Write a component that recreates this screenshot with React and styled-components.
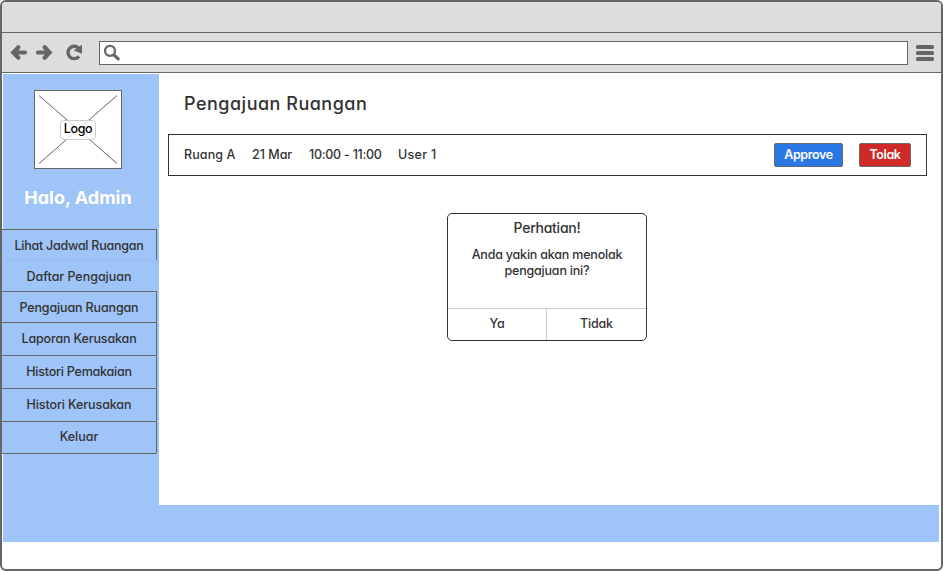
import React from "react";
import styled, { createGlobalStyle } from "styled-components";

const line = "#666666";
const ink = "#333333";
const blue = "#9fc4f7";

const GlobalStyle = createGlobalStyle`
  *, *::before, *::after { box-sizing: border-box; }
  body {
    margin: 0;
    background: #fff;
    color: ${ink};
    font: 500 12.5px/16px Inter, "Open Sans", sans-serif;
    font-feature-settings: "cv11" 1;
  }
  button { font: inherit; font-feature-settings: inherit; color: inherit; padding: 0; margin: 0; }
  h1, h2, p { margin: 0; }
`;

const Window = styled.div`
  display: flex;
  flex-direction: column;
  width: 943px;
  height: 571px;
  border: 2px solid ${line};
  border-radius: 6px;
  overflow: hidden;
`;

const TitleBar = styled.div`
  flex: none;
  height: 31px;
  background: #ddd;
  border-bottom: 1px solid ${line};
`;

const Toolbar = styled.div`
  flex: none;
  display: flex;
  align-items: flex-start;
  height: 40px;
  padding: 8px 7px 0 8px;
  background: #ddd;
  border-bottom: 1px solid ${line};
`;

const NavIcons = styled.svg`
  width: 89px;
  height: 24px;
`;

const AddressBar = styled.div`
  width: 809px;
  height: 24px;
  padding: 2px 3px;
  background: #fff;
  border: 1px solid ${line};
`;

const SearchIcon = styled.svg`
  display: block;
  width: 18px;
  height: 18px;
`;

const MenuIcon = styled.svg`
  width: 18px;
  height: 24px;
  margin-left: 8px;
`;

const Page = styled.div`
  flex: none;
  width: 938px;
  margin-top: 1px;
`;

const Body = styled.div`
  display: flex;
  height: 431px;
`;

const Sidebar = styled.aside`
  width: 157px;
  background: linear-gradient(${blue}, ${blue}) 1px 0 no-repeat;
`;

const LogoBox = styled.div`
  display: grid;
  place-items: center;
  width: 88px;
  height: 79px;
  margin: 16px 0 0 32px;
  border: 1px solid ${line};
  background: #fff;
  > * { grid-area: 1 / 1; }
`;

const Cross = styled.svg`
  width: 86px;
  height: 77px;
`;

const LogoLabel = styled.span`
  width: 36px;
  height: 20px;
  border: 1px solid #ccc;
  border-radius: 4px;
  background: rgba(255, 255, 255, 0.8);
  color: #000;
  line-height: 16px;
  text-align: center;
  letter-spacing: -0.3px;
`;

const Greeting = styled.h2`
  margin: 16px 0 18px;
  padding-right: 5px;
  color: #fff;
  font-size: 18px;
  font-weight: 700;
  line-height: 26px;
  text-align: center;
`;

const Menu = styled.nav`
  width: 156px;
  margin-left: -1px;
`;

const MenuItem = styled.button`
  display: block;
  width: 156px;
  height: ${(p) => p.$height}px;
  padding-top: ${(p) => p.$shift || 0}px;
  padding-bottom: ${(p) => (p.$last ? 2 : 0)}px;
  border: 1px solid ${(p) => (p.$active ? "#94bdf4" : line)};
  border-bottom-width: ${(p) => (p.$last ? 1 : 0)}px;
  border-radius: 1px;
  background: ${blue};
  line-height: 16px;
  text-align: center;
  letter-spacing: ${(p) => p.$spacing}px;
`;

const Main = styled.main`
  flex: 1;
`;

const Title = styled.h1`
  margin: 17px 0 17px 25px;
  font-size: 18px;
  font-weight: 500;
  line-height: 26px;
  letter-spacing: 0.5px;
`;

const Request = styled.section`
  display: flex;
  align-items: center;
  width: 759px;
  height: 42px;
  margin-left: 9px;
  padding: 0 15px;
  border: 1px solid ${ink};
`;

const Cell = styled.span`
  width: ${(p) => p.$width}px;
  letter-spacing: ${(p) => p.$spacing}px;
  white-space: nowrap;
`;

const Action = styled.button`
  width: ${(p) => p.$width}px;
  height: 24px;
  margin-left: ${(p) => (p.$first ? "auto" : "16px")};
  border: 1px solid ${line};
  border-radius: 2px;
  background: ${(p) => p.$color};
  color: #fff;
  font-weight: 600;
  line-height: 22px;
  letter-spacing: -0.4px;
`;

const Dialog = styled.section`
  display: flex;
  flex-direction: column;
  width: 200px;
  height: 128px;
  margin: 37px 0 0 288px;
  border: 1px solid ${ink};
  border-radius: 5px;
  text-align: center;
`;

const DialogTitle = styled.h2`
  margin-top: 5px;
  font-size: 14px;
  font-weight: 500;
  line-height: 18px;
  letter-spacing: -0.25px;
`;

const Message = styled.p`
  margin-top: 10px;
  line-height: 16px;
  letter-spacing: -0.2px;
`;

const Choices = styled.div`
  display: grid;
  grid-template-columns: 98px 100px;
  height: 32px;
  margin-top: auto;
  border-top: 1px solid #ccc;
`;

const Choice = styled.button`
  padding-bottom: 2px;
  border: 0;
  border-left: ${(p) => (p.$divided ? "1px solid #ccc" : "0")};
  background: none;
  line-height: 16px;
  letter-spacing: -0.2px;
`;

const Footer = styled.footer`
  height: 37px;
  margin: 0 1px;
  background: ${blue};
`;

const items = [
  { label: "Lihat Jadwal Ruangan", height: 31, spacing: -0.25, shift: 2 },
  { label: "Daftar Pengajuan", height: 31, spacing: -0.03, shift: 2, active: true },
  { label: "Pengajuan Ruangan", height: 31, spacing: -0.14, shift: 2 },
  { label: "Laporan Kerusakan", height: 33, spacing: -0.14 },
  { label: "Histori Pemakaian", height: 33, spacing: -0.22 },
  { label: "Histori Kerusakan", height: 33, spacing: -0.1 },
  { label: "Keluar", height: 33, spacing: 0 },
];

export default function App() {
  return (
    <>
      <GlobalStyle />
      <Window>
        <TitleBar />
        <Toolbar>
          <NavIcons viewBox="0 0 89 24" fill="none" stroke={line} strokeWidth="4.2">
            <path d="M15 11.5H4M8.4 6.2L3.3 11.5l5.1 5.3" strokeLinecap="round" strokeLinejoin="miter" />
            <path d="M28 11.5h11M34.6 6.2l5.1 5.3-5.1 5.3" strokeLinecap="round" strokeLinejoin="miter" />
            <path d="M68.4 6.9A6.2 6.2 0 1 0 69 15.4" strokeWidth="3.4" />
            <path d="M72 3.8v9l-8.4-3.2z" fill={line} stroke="none" />
          </NavIcons>
          <AddressBar>
            <SearchIcon viewBox="0 0 18 18" fill="none" stroke={line}>
              <circle cx="7" cy="6.8" r="5" strokeWidth="2.3" />
              <path d="M11 11l4.2 3.9" strokeWidth="3.2" strokeLinecap="round" />
            </SearchIcon>
          </AddressBar>
          <MenuIcon viewBox="0 0 18 24" fill={line}>
            <rect y="4" width="18" height="4" rx="1.5" />
            <rect y="10" width="18" height="4" rx="1.5" />
            <rect y="16" width="18" height="4" rx="1.5" />
          </MenuIcon>
        </Toolbar>
        <Page>
          <Body>
            <Sidebar>
              <LogoBox>
                <Cross viewBox="0 0 86 77" stroke={line} strokeWidth="1">
                  <path d="M4 4.5l78 68M82 4.5l-78 68" />
                </Cross>
                <LogoLabel>Logo</LogoLabel>
              </LogoBox>
              <Greeting>Halo, Admin</Greeting>
              <Menu>
                {items.map((m, i) => (
                  <MenuItem
                    key={m.label}
                    $height={m.height}
                    $spacing={m.spacing}
                    $shift={m.shift}
                    $active={m.active}
                    $last={i === items.length - 1}
                  >
                    {m.label}
                  </MenuItem>
                ))}
              </Menu>
            </Sidebar>
            <Main>
              <Title>Pengajuan Ruangan</Title>
              <Request>
                <Cell $width={68} $spacing={0.1}>Ruang A</Cell>
                <Cell $width={57} $spacing={0}>21 Mar</Cell>
                <Cell $width={89} $spacing={-0.25}>10:00 - 11:00</Cell>
                <Cell $width={60} $spacing={0.3}>User 1</Cell>
                <Action $first $width={69} $color="#2b78e4">Approve</Action>
                <Action $width={52} $color="#cf2a27">Tolak</Action>
              </Request>
              <Dialog>
                <DialogTitle>Perhatian!</DialogTitle>
                <Message>Anda yakin akan menolak<br />pengajuan ini?</Message>
                <Choices>
                  <Choice>Ya</Choice>
                  <Choice $divided>Tidak</Choice>
                </Choices>
              </Dialog>
            </Main>
          </Body>
          <Footer />
        </Page>
      </Window>
    </>
  );
}
